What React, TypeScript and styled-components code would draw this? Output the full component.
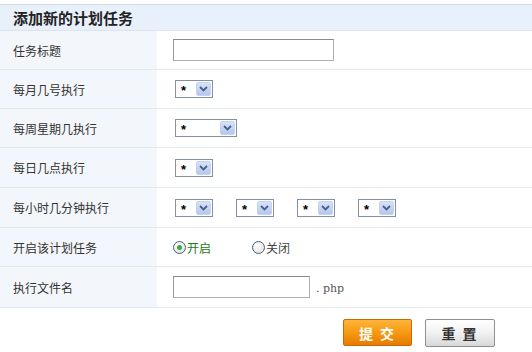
import React from "react";
import styled, { createGlobalStyle } from "styled-components";

const Global = createGlobalStyle`
  html, body { margin: 0; padding: 0; background: #fff; }
  body { font-family: "Noto Sans CJK SC", "Noto Sans", sans-serif; font-size: 12px; color: #333; }
`;

const Page = styled.div`
  width: 532px;
  padding-top: 4px;
`;

const Header = styled.div`
  height: 25px;
  border-top: 1px solid #d2dbe4;
  border-bottom: 1px solid #dbe4ee;
  background: #e8f1fb;
  padding-left: 13px;
  display: flex;
  align-items: center;
  font-size: 15px;
  font-weight: bold;
  color: #222;
  letter-spacing: 0;
`;

const Row = styled.div<{ $h: number }>`
  display: grid;
  grid-template-columns: 157px 1fr;
  height: ${(p) => p.$h}px;
  border-bottom: 1px solid #e0e8f0;
  box-sizing: border-box;
`;

const Label = styled.div`
  background: #f3f7fc;
  display: flex;
  align-items: center;
  padding-left: 13px;
  font-size: 12px;
  color: #333;
`;

const Field = styled.div<{ $gap?: number }>`
  display: flex;
  align-items: center;
  padding-left: 16px;
  gap: ${(p) => p.$gap ?? 0}px;
  background: #fff;
`;

const TextInput = styled.div<{ $w: number }>`
  width: ${(p) => p.$w}px;
  height: 22px;
  box-sizing: border-box;
  border: 1px solid #b0b0b0;
  border-top-color: #8a8a8a;
  border-left-color: #9a9a9a;
  background: #fff;
`;

const Select = styled.div<{ $w: number }>`
  width: ${(p) => p.$w}px;
  height: 18px;
  box-sizing: border-box;
  border: 1px solid #84909c;
  background: #fff;
  display: flex;
  align-items: center;
  justify-content: space-between;
  padding: 0 1px 0 5px;
  margin-left: 2px;
  font-family: "Liberation Sans", sans-serif;
  font-size: 13px;
  font-weight: bold;
  color: #000;
`;

const DropBtn = styled.span`
  width: 15px;
  height: 14px;
  border-radius: 2px;
  background: linear-gradient(#d6e2f8, #b4c7ee);
  border: 1px solid #c4d3f0;
  box-sizing: border-box;
  display: flex;
  align-items: center;
  justify-content: center;
`;

const Star = styled.span`
  line-height: 1;
  margin-top: 3px;
`;

const RadioItem = styled.label<{ $on?: boolean }>`
  display: flex;
  align-items: center;
  font-size: 12px;
  color: ${(p) => (p.$on ? "#237a16" : "#444")};
  gap: 1px;
`;

const RadioCircle = styled.span<{ $on?: boolean }>`
  width: 13px;
  height: 13px;
  box-sizing: border-box;
  border-radius: 50%;
  border: 1px solid #4a6078;
  background: radial-gradient(circle at 40% 35%, #ffffff, #dcdcdc);
  display: flex;
  align-items: center;
  justify-content: center;
  &::after {
    content: "";
    width: 5px;
    height: 5px;
    border-radius: 50%;
    background: ${(p) => (p.$on ? "#3aa84a" : "transparent")};
  }
`;

const Ext = styled.span`
  font-family: "DejaVu Serif", serif;
  font-size: 11px;
  color: #555;
  margin-left: 6px;
  margin-top: 2px;
`;

const Footer = styled.div`
  display: flex;
  justify-content: flex-end;
  gap: 13px;
  padding: 11px 37px 0 0;
`;

const Button = styled.button<{ $primary?: boolean }>`
  width: ${(p) => (p.$primary ? 69 : 70)}px;
  height: ${(p) => (p.$primary ? 27 : 28)}px;
  box-sizing: border-box;
  border: 1px solid ${(p) => (p.$primary ? "#c76a00" : "#8f8f8f")};
  border-radius: 2px;
  background: ${(p) =>
    p.$primary
      ? "linear-gradient(#ffb43a, #f59a12 50%, #e87a00)"
      : "linear-gradient(#ffffff, #f1f1f1 50%, #d8d8d8)"};
  color: ${(p) => (p.$primary ? "#fff" : "#333")};
  font-family: "Noto Sans CJK SC", sans-serif;
  font-weight: bold;
  font-size: 14px;
  letter-spacing: 2px;
  padding: 0;
  white-space: pre;
`;

const Chevron = () => (
  <svg width="9" height="6" viewBox="0 0 9 6">
    <path d="M1 1 L4.5 4.5 L8 1" fill="none" stroke="#4a5e88" strokeWidth="1.8" />
  </svg>
);

const Sel = ({ w }: { w: number }) => (
  <Select $w={w}>
    <Star>*</Star>
    <DropBtn>
      <Chevron />
    </DropBtn>
  </Select>
);

export default function App() {
  return (
    <Page>
      <Global />
      <Header>添加新的计划任务</Header>
      <Row $h={39}>
        <Label>任务标题</Label>
        <Field>
          <TextInput $w={161} />
        </Field>
      </Row>
      <Row $h={39}>
        <Label>每月几号执行</Label>
        <Field>
          <Sel w={38} />
        </Field>
      </Row>
      <Row $h={39}>
        <Label>每周星期几执行</Label>
        <Field>
          <Sel w={62} />
        </Field>
      </Row>
      <Row $h={40}>
        <Label>每日几点执行</Label>
        <Field>
          <Sel w={38} />
        </Field>
      </Row>
      <Row $h={40}>
        <Label>每小时几分钟执行</Label>
        <Field $gap={21}>
          <Sel w={38} />
          <Sel w={38} />
          <Sel w={38} />
          <Sel w={38} />
        </Field>
      </Row>
      <Row $h={39}>
        <Label>开启该计划任务</Label>
        <Field $gap={41}>
          <RadioItem $on>
            <RadioCircle $on />
            开启
          </RadioItem>
          <RadioItem>
            <RadioCircle />
            关闭
          </RadioItem>
        </Field>
      </Row>
      <Row $h={41}>
        <Label>执行文件名</Label>
        <Field>
          <TextInput $w={137} />
          <Ext>. php</Ext>
        </Field>
      </Row>
      <Footer>
        <Button $primary>提 交</Button>
        <Button>重 置</Button>
      </Footer>
    </Page>
  );
}
